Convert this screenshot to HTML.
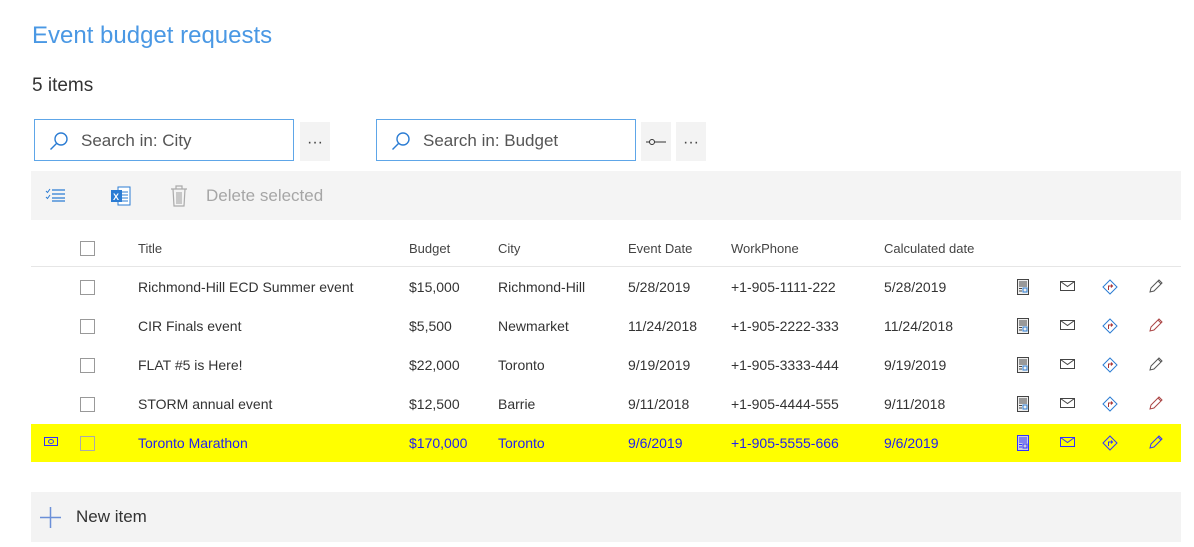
<!DOCTYPE html>
<html><head><style>
body{margin:0;width:1194px;height:547px;background:#fff;font-family:"Liberation Sans",sans-serif;position:relative;overflow:hidden;color:#333}
.a{position:absolute;white-space:nowrap}
.sb{position:absolute;border:1px solid #5ea6e8;background:#fff;height:42px;box-sizing:border-box}
.sb span{position:absolute;left:46px;top:11px;font-size:17px;color:#555}
.sb svg{position:absolute;left:14px;top:11px}
.btn{position:absolute;background:#f3f3f3;height:39px;top:122px;width:30px;text-align:center;font-size:16px;color:#444;line-height:42px}
.row{position:absolute;left:31px;width:1150px;height:39px;font-size:14px;color:#333}
.row div{position:absolute;top:11px}
.cb{width:13px;height:13px;border:1px solid #999;left:49px;top:12px!important}
.hd{font-size:13px;color:#444}
</style></head><body>
<div class="a" style="left:32px;top:22px;font-size:24px;color:#4a98e4">Event budget requests</div>
<div class="a" style="left:32px;top:75px;font-size:19px;color:#333">5 items</div>

<div class="sb" style="left:34px;top:119px;width:260px"><svg width="20" height="20" viewBox="0 0 20 20"><circle cx="12" cy="8" r="6" fill="none" stroke="#2b7cd3" stroke-width="1.4"/><line x1="7.5" y1="12.5" x2="1.5" y2="18.5" stroke="#2b7cd3" stroke-width="1.4"/></svg><span>Search in: City</span></div>
<div class="btn" style="left:300px">···</div>
<div class="sb" style="left:376px;top:119px;width:260px"><svg width="20" height="20" viewBox="0 0 20 20"><circle cx="12" cy="8" r="6" fill="none" stroke="#2b7cd3" stroke-width="1.4"/><line x1="7.5" y1="12.5" x2="1.5" y2="18.5" stroke="#2b7cd3" stroke-width="1.4"/></svg><span>Search in: Budget</span></div>
<div class="btn" style="left:641px"><svg width="20" height="10" viewBox="0 0 20 10" style="margin-top:14px"><circle cx="6" cy="5" r="2.5" fill="none" stroke="#333"/><line x1="0" y1="5" x2="3.5" y2="5" stroke="#333"/><line x1="8.5" y1="5" x2="20" y2="5" stroke="#333"/></svg></div>
<div class="btn" style="left:676px">···</div>

<div class="a" style="left:31px;top:171px;width:1150px;height:49px;background:#f4f4f4"></div>
<svg class="a" style="left:45px;top:188px" width="22" height="14" viewBox="0 0 22 14"><path d="M1 3l1.5 1.5L5 1M1 9l1.5 1.5L5 7" fill="none" stroke="#2b7cd3"/><path d="M7 2h13M7 6h13M7 10h13M7 13h13" stroke="#2b7cd3" stroke-width="1.2"/></svg>
<svg class="a" style="left:110px;top:185px" width="22" height="22" viewBox="0 0 22 22"><rect x="8" y="2" width="12" height="18" fill="#fff" stroke="#2b7cd3"/><path d="M11 7h7M11 10h7M11 13h7M11 16h7" stroke="#2b7cd3"/><rect x="1" y="5" width="11" height="12" fill="#2b7cd3"/><text x="3" y="15" font-size="9" fill="#fff" font-family="Liberation Sans" font-weight="bold">X</text></svg>
<svg class="a" style="left:170px;top:185px" width="18" height="22" viewBox="0 0 18 22"><path d="M1 4h16M6 4V1h6v3M3 4l1 17h10l1-17M7 7v12M9 7v12M11 7v12" fill="none" stroke="#aaa" stroke-width="1.2"/></svg>
<div class="a" style="left:206px;top:186px;font-size:17px;color:#a6a6a6">Delete selected</div>

<div class="row hd" style="top:230px;height:36px;border-bottom:1px solid #e6e6e6">
<div class="cb" style="top:11px!important"></div>
<div style="left:107px;top:11px">Title</div><div style="left:378px;top:11px">Budget</div><div style="left:467px;top:11px">City</div><div style="left:597px;top:11px">Event Date</div><div style="left:700px;top:11px">WorkPhone</div><div style="left:853px;top:11px">Calculated date</div>
</div>

<div id="rows"></div>
<script>
var d=[["Richmond-Hill ECD Summer event","$15,000","Richmond-Hill","5/28/2019","+1-905-1111-222","5/28/2019"],["CIR Finals event","$5,500","Newmarket","11/24/2018","+1-905-2222-333","11/24/2018"],["FLAT #5 is Here!","$22,000","Toronto","9/19/2019","+1-905-3333-444","9/19/2019"],["STORM annual event","$12,500","Barrie","9/11/2018","+1-905-4444-555","9/11/2018"],["Toronto Marathon","$170,000","Toronto","9/6/2019","+1-905-5555-666","9/6/2019"]];
var L=[107,378,467,597,700,853],h="";
d.forEach(function(r,i){var y=267+i*39,hl=i==4,c=hl?"#3333ff":"#444",bg=hl?"background:#ffff00;":"";
h+='<div class="row" style="top:'+(y+1)+'px;height:38px;'+bg+(hl?'color:#2222ee':'')+'">';
if(hl)h+='<svg style="position:absolute;left:13px;top:13px" width="14" height="10" viewBox="0 0 14 10"><rect x="0.5" y="0.5" width="13" height="8" fill="none" stroke="#33f"/><ellipse cx="7" cy="4.5" rx="2.5" ry="2" fill="none" stroke="#33f"/></svg>';
h+='<div class="cb"'+(hl?' style="border-color:#aaa"':'')+'></div>';
r.forEach(function(t,j){h+='<div style="left:'+L[j]+'px">'+t+'</div>'});
h+='<svg style="position:absolute;left:986px;top:11px" width="12" height="16" viewBox="0 0 12 16"><rect x="0.5" y="0.5" width="11" height="15" fill="'+(hl?'#ccd':'#eee')+'" stroke="'+c+'"/><path d="M2 3h8M2 5h8M2 7h8M2 9.5h3M2 12h3" stroke="'+c+'"/><rect x="6" y="9" width="4" height="4" fill="none" stroke="'+(hl?c:'#2b7cd3')+'"/></svg>';
h+='<svg style="position:absolute;left:1029px;top:13px" width="15" height="10" viewBox="0 0 15 10"><rect x="0.5" y="0.5" width="14" height="9" fill="none" stroke="'+c+'"/><path d="M0.5 0.5l7 5 7-5" fill="none" stroke="'+c+'"/></svg>';
h+='<svg style="position:absolute;left:1071px;top:11px" width="16" height="16" viewBox="0 0 16 16"><path d="M8 1l7 7-7 7-7-7z" fill="none" stroke="'+(hl?c:'#2b7cd3')+'"/><path d="M6.5 11V7h4M9 5.5l1.5 1.5L9 8.5" fill="none" stroke="'+(hl?c:'#a33')+'"/></svg>';
h+='<svg style="position:absolute;left:1117px;top:10px" width="16" height="16" viewBox="0 0 16 16"><path d="M2 14l1-4 8-8 3 3-8 8z M10 3l3 3" fill="none" stroke="'+(hl?c:(i%2?'#a44':'#555'))+'"/></svg>';
h+='</div>'});
document.getElementById("rows").innerHTML=h;
</script>

<div class="a" style="left:31px;top:492px;width:1150px;height:50px;background:#f3f3f3"></div>
<svg class="a" style="left:40px;top:507px" width="21" height="21" viewBox="0 0 21 21"><path d="M10.5 0v21M0 10.5h21" stroke="#6b8fd8" stroke-width="1.5"/></svg>
<div class="a" style="left:76px;top:507px;font-size:17px;color:#333">New item</div>
</body></html>
